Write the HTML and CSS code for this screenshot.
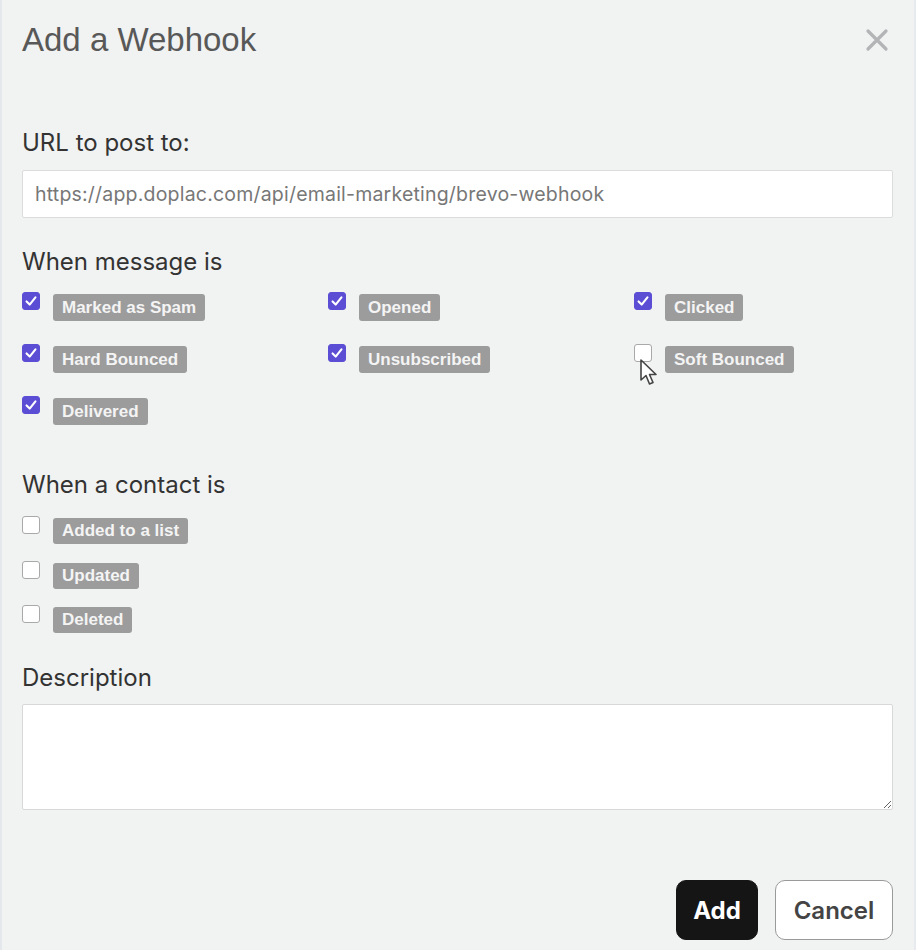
FILE: index.html
```html
<!DOCTYPE html>
<html lang="en">
<head>
<meta charset="utf-8">
<title>Add a Webhook</title>
<link rel="stylesheet" href="styles.css">
</head>
<body>
<div class="modal">
  <div class="modal-header">
    <h1 class="modal-title">Add a Webhook</h1>
    <button class="close-btn" aria-label="Close">
      <svg width="24" height="24" viewBox="0 0 24 24"><path d="M3 3 L21 21 M21 3 L3 21" stroke="#b2b4b6" stroke-width="3.2" stroke-linecap="round" fill="none"/></svg>
    </button>
  </div>

  <label class="field-label url-label">URL to post to:</label>
  <div class="text-input">https://app.doplac.com/api/email-marketing/brevo-webhook</div>

  <div class="section-label msg-label">When message is</div>
  <div class="check-grid">
    <div class="check-item"><span class="cbox checked"><svg viewBox="0 0 18 18"><path d="M4 9.5 L7.5 13 L14 5" stroke="#fff" stroke-width="2.4" fill="none" stroke-linecap="round" stroke-linejoin="round"/></svg></span><span class="badge">Marked as Spam</span></div>
    <div class="check-item"><span class="cbox checked"><svg viewBox="0 0 18 18"><path d="M4 9.5 L7.5 13 L14 5" stroke="#fff" stroke-width="2.4" fill="none" stroke-linecap="round" stroke-linejoin="round"/></svg></span><span class="badge">Opened</span></div>
    <div class="check-item"><span class="cbox checked"><svg viewBox="0 0 18 18"><path d="M4 9.5 L7.5 13 L14 5" stroke="#fff" stroke-width="2.4" fill="none" stroke-linecap="round" stroke-linejoin="round"/></svg></span><span class="badge">Clicked</span></div>
    <div class="check-item"><span class="cbox checked"><svg viewBox="0 0 18 18"><path d="M4 9.5 L7.5 13 L14 5" stroke="#fff" stroke-width="2.4" fill="none" stroke-linecap="round" stroke-linejoin="round"/></svg></span><span class="badge">Hard Bounced</span></div>
    <div class="check-item"><span class="cbox checked"><svg viewBox="0 0 18 18"><path d="M4 9.5 L7.5 13 L14 5" stroke="#fff" stroke-width="2.4" fill="none" stroke-linecap="round" stroke-linejoin="round"/></svg></span><span class="badge">Unsubscribed</span></div>
    <div class="check-item has-cursor"><span class="cbox"></span><span class="badge">Soft Bounced</span>
      <svg class="cursor" width="22" height="30" viewBox="0 0 22 30"><path d="M2 2 L2 22 L7 17.5 L10.5 26 L14 24.5 L10.5 16.5 L17 16.5 Z" fill="#fff" stroke="#444" stroke-width="1.6" stroke-linejoin="round"/></svg>
    </div>
    <div class="check-item"><span class="cbox checked"><svg viewBox="0 0 18 18"><path d="M4 9.5 L7.5 13 L14 5" stroke="#fff" stroke-width="2.4" fill="none" stroke-linecap="round" stroke-linejoin="round"/></svg></span><span class="badge">Delivered</span></div>
  </div>

  <div class="section-label contact-label">When a contact is</div>
  <div class="check-list">
    <div class="check-item"><span class="cbox"></span><span class="badge">Added to a list</span></div>
    <div class="check-item"><span class="cbox"></span><span class="badge">Updated</span></div>
    <div class="check-item"><span class="cbox"></span><span class="badge">Deleted</span></div>
  </div>

  <div class="section-label desc-label">Description</div>
  <textarea class="textarea"></textarea>

  <div class="actions">
    <button class="btn btn-primary">Add</button>
    <button class="btn btn-secondary">Cancel</button>
  </div>
</div>
</body>
</html>
```
FILE: styles.css
```css
* { box-sizing: border-box; }
html, body {
  margin: 0;
  padding: 0;
  background: #f1f2f2;
}
body {
  font-family: Inter, "Liberation Sans", Arial, sans-serif;
  color: #333;
}
.modal {
  width: 916px;
  height: 950px;
  padding: 0 21px 0 20px;
  border-left: 2px solid #e4e8ec;
  border-right: 2px solid #e8ebee;
  position: relative;
  overflow: hidden;
}
.modal-header {
  display: flex;
  justify-content: space-between;
  align-items: center;
  height: 80px;
}
.modal-title {
  margin: 0;
  font-family: "Liberation Sans", Arial, sans-serif;
  font-weight: normal;
  font-size: 33px;
  color: #585858;
}
.close-btn {
  background: none;
  border: 0;
  padding: 0;
  margin-right: 4px;
  width: 24px;
  height: 24px;
}
.field-label, .section-label {
  display: block;
  font-size: 24px;
  color: #333;
  line-height: 30px;
}
.url-label { margin-top: 48px; }
.text-input {
  margin-top: 12px;
  height: 48px;
  background: #fff;
  border: 1px solid #dcdcdc;
  border-radius: 2px;
  padding: 0 12px;
  line-height: 46px;
  font-size: 19.5px;
  letter-spacing: 0.2px;
  color: #777;
}
.msg-label { margin-top: 29px; }
.check-grid {
  margin-top: 15px;
  display: grid;
  grid-template-columns: 306px 306px 1fr;
  row-gap: 23px;
}
.check-item {
  display: flex;
  align-items: flex-start;
  gap: 13px;
  position: relative;
}
.cbox {
  width: 18px;
  height: 18px;
  border: 1px solid #a9a9a9;
  border-radius: 3px;
  background: #fff;
  flex: none;
  display: flex;
}
.cbox.checked {
  background: #5b4dd4;
  border-color: #5b4dd4;
}
.cbox svg { width: 16px; height: 16px; }
.badge {
  margin-top: 2px;
  height: 27px;
  line-height: 27px;
  padding: 0 9px;
  border-radius: 3px;
  background: #9c9c9c;
  color: #f4f4f4;
  font-family: "Liberation Sans", Arial, sans-serif;
  font-weight: bold;
  font-size: 17px;
}
.cursor {
  position: absolute;
  left: 5px;
  top: 14px;
}
.contact-label { margin-top: 45px; }
.check-list {
  margin-top: 16px;
  display: flex;
  flex-direction: column;
  gap: 16.5px;
}
.check-list .badge { height: 26px; line-height: 26px; }
.desc-label { margin-top: 30px; }
.textarea {
  display: block;
  margin-top: 11px;
  width: 100%;
  height: 106px;
  background: #fff;
  border: 1px solid #d8d8d8;
  border-radius: 2px;
  resize: vertical;
  font-family: inherit;
}
.actions {
  display: flex;
  justify-content: flex-end;
  gap: 17px;
  margin-top: 70px;
}
.btn {
  height: 60px;
  border-radius: 10px;
  font-family: Inter, "Liberation Sans", Arial, sans-serif;
  font-size: 24px;
  padding: 0;
}
.btn-primary {
  width: 82px;
  background: #151515;
  color: #fff;
  border: 1px solid #151515;
  font-weight: 700;
}
.btn-secondary {
  width: 118px;
  background: #fff;
  color: #444;
  border: 1.5px solid #9a9a9a;
  font-weight: 600;
}
```
